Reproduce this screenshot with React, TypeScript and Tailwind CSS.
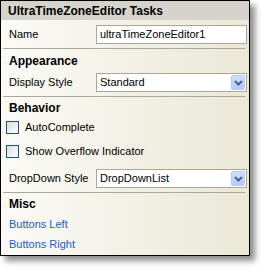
import React from 'react';

const font = { fontFamily: '"Liberation Sans", Arial, sans-serif' };

function Chevron() {
  return (
    <svg width="9" height="6" viewBox="0 0 9 6" className="block">
      <path d="M1 1 L4.5 4.5 L8 1" fill="none" stroke="#4d6185" strokeWidth="2" />
    </svg>
  );
}

function Combo({ value }: { value: string }) {
  return (
    <div className="ml-auto flex h-[19px] w-[151px] items-center border border-[#aca899] bg-white pl-[3px] pr-[1px]">
      <span className="flex-1 truncate">{value}</span>
      <div className="flex h-[15px] w-[14px] items-center justify-center rounded-[2px] border border-[#b9c9ef] bg-gradient-to-b from-[#cfdcfd] to-[#b6c9f8]">
        <Chevron />
      </div>
    </div>
  );
}

function Check({ label }: { label: string }) {
  return (
    <div className="flex h-[17px] items-center pl-[5px]">
      <div className="h-[13px] w-[13px] border border-[#1c5180] bg-gradient-to-br from-[#dcdcd7] to-white" />
      <span className="ml-[6px]">{label}</span>
    </div>
  );
}

function Sep() {
  return <div className="mx-[2px] h-px bg-[#aca899]" />;
}

export default function App() {
  return (
    <div className="h-[276px] w-[270px] bg-white text-[11px] text-black" style={font}>
      <div className="flex h-[256px] w-[250px] flex-col border border-black bg-gradient-to-r from-[#fbfaf6] to-[#ebe8d7] shadow-[5px_5px_6px_rgba(0,0,0,0.45)]">
        <div className="flex h-[19px] items-center bg-[#d6d3cc] pl-[7px] text-[12px] font-bold">
          UltraTimeZoneEditor Tasks
        </div>
        <div className="flex flex-col pr-[2px]">
          <div className="mt-[5px] flex h-[19px] items-center pl-[8px]">
            <span>Name</span>
            <div className="ml-auto flex h-[19px] w-[151px] items-center border border-[#aca899] bg-white pl-[3px]">
              ultraTimeZoneEditor1
            </div>
          </div>
          <div className="mt-[4px]"><Sep /></div>
          <div className="flex h-[24px] items-center pl-[8px] text-[12px] font-bold">Appearance</div>
          <div className="flex h-[19px] items-center pl-[8px]">
            <span>Display Style</span>
            <Combo value="Standard" />
          </div>
          <div className="mt-[4px]"><Sep /></div>
          <div className="flex h-[22px] items-center pl-[8px] text-[12px] font-bold">Behavior</div>
          <Check label="AutoComplete" />
          <div className="mt-[7px]"><Check label="Show Overflow Indicator" /></div>
          <div className="mt-[9px] flex h-[19px] items-center pl-[8px]">
            <span>DropDown Style</span>
            <Combo value="DropDownList" />
          </div>
          <div className="mt-[4px]"><Sep /></div>
          <div className="flex h-[21px] items-center pl-[8px] text-[12px] font-bold">Misc</div>
          <div className="flex h-[20px] items-center pl-[8px] text-[#215dc6]">Buttons Left</div>
          <div className="flex h-[20px] items-center pl-[8px] text-[#215dc6]">Buttons Right</div>
        </div>
      </div>
    </div>
  );
}
